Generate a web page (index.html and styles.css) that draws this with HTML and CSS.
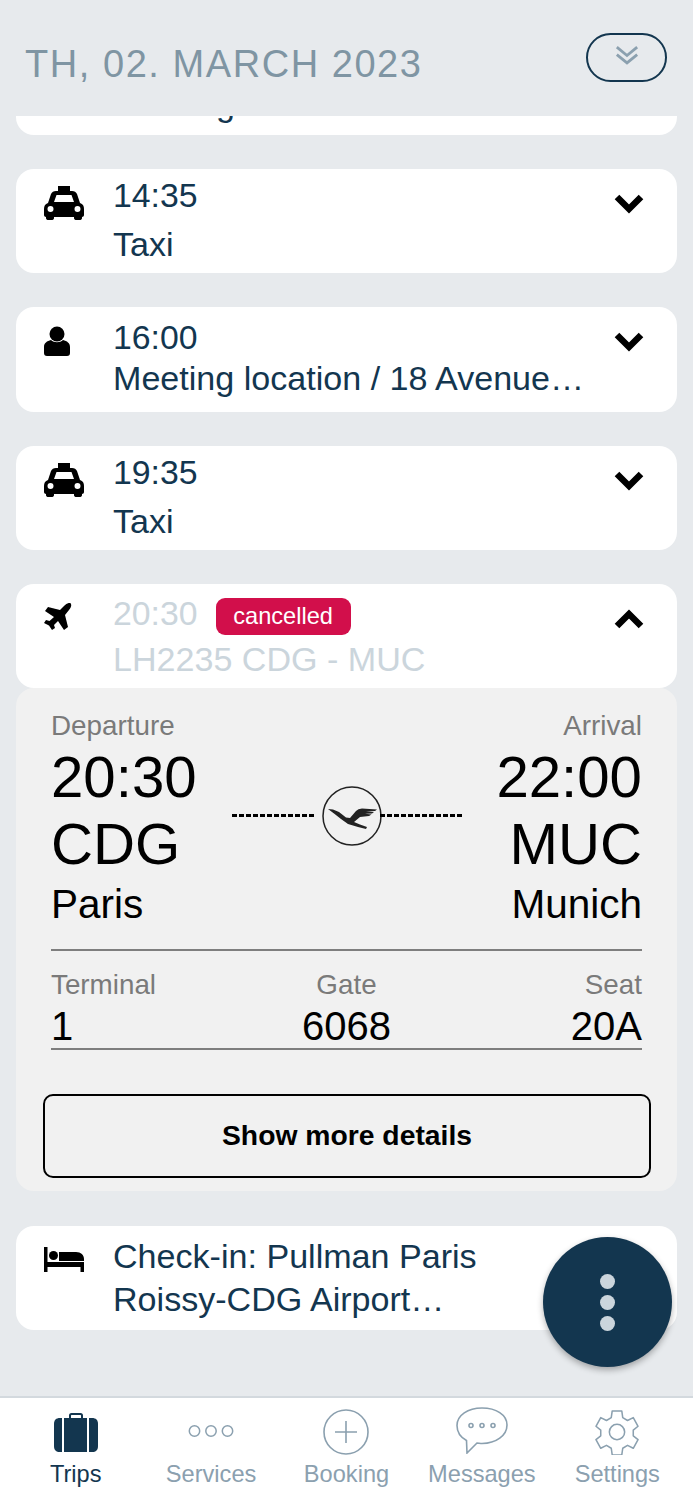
FILE: index.html
```html
<!DOCTYPE html>
<html lang="en">
<head>
    <meta charset="UTF-8">
    <meta name="viewport" content="width=device-width, initial-scale=1.0">
    <title>Trips</title>
    <link rel="stylesheet" href="styles.css">
</head>
<body>
    <header class="day-header">
        <h1 class="day-title">TH, 02. MARCH 2023</h1>
        <button class="collapse-all" aria-label="Collapse all">
            <svg viewBox="0 0 26 22" width="24" height="21"><path d="M2 2l11 9 11-9M2 10l11 9 11-9" fill="none" stroke="#8ba0af" stroke-width="3"/></svg>
        </button>
    </header>

    <main class="trip-list">
        <div class="card card-clipped">
            <p class="clipped-text">Meeting</p>
        </div>

        <div class="card">
            <svg class="card-icon" viewBox="0 0 40 34" width="40" height="34"><use href="#icon-taxi"/></svg>
            <div class="card-text">
                <p class="time">14:35</p>
                <p class="title title-low">Taxi</p>
            </div>
            <svg class="chevron" viewBox="0 0 30 20" width="30" height="20"><use href="#icon-down"/></svg>
        </div>

        <div class="card card-person">
            <svg class="card-icon" viewBox="0 0 26 30" width="26" height="30">
                <circle cx="13" cy="8" r="7.5"/>
                <path d="M7 14c3 3 9 3 12 0 4 1 7 3 7 7v6c0 2-1 3-3 3H3c-2 0-3-1-3-3v-6c0-4 3-6 7-7z"/>
            </svg>
            <div class="card-text">
                <p class="time">16:00</p>
                <p class="title">Meeting location / 18 Avenue…</p>
            </div>
            <svg class="chevron" viewBox="0 0 30 20" width="30" height="20"><use href="#icon-down"/></svg>
        </div>

        <div class="card">
            <svg class="card-icon" viewBox="0 0 40 34" width="40" height="34"><use href="#icon-taxi"/></svg>
            <div class="card-text">
                <p class="time">19:35</p>
                <p class="title title-low">Taxi</p>
            </div>
            <svg class="chevron" viewBox="0 0 30 20" width="30" height="20"><use href="#icon-down"/></svg>
        </div>

        <section class="flight">
            <div class="card card-flight">
                <svg class="card-icon" viewBox="0 0 28 28" width="28" height="28">
                    <path d="M26 0C28 1 27.500 4 25 7L21 12 24 24 20 27 14 18 10 22 11 25 8 27 5 22.500 0 20 2 17 5.500 18 10 14 1 8 4 4 16 7 20 3C22 1 24.500-.5 26 0z"/>
                </svg>
                <div class="card-text">
                    <p class="time muted">20:30<span class="badge">cancelled</span></p>
                    <p class="title muted">LH2235 CDG - MUC</p>
                </div>
                <svg class="chevron" viewBox="0 0 30 20" width="30" height="20"><path d="M3 17L15 5l12 12" fill="none" stroke="#000" stroke-width="6.500"/></svg>
            </div>

            <div class="flight-detail">
                <div class="route">
                    <div class="route-end">
                        <span class="label">Departure</span>
                        <span class="big">20:30</span>
                        <span class="big">CDG</span>
                        <span class="city">Paris</span>
                    </div>
                    <div class="route-line">
                        <span class="dots dots-left"></span>
                        <svg class="crane" viewBox="0 0 60 60" width="60" height="60">
                            <circle cx="30" cy="30" r="29" fill="none" stroke="#222" stroke-width="1.500"/>
                            <path d="M6 23L11 23.500 17 26 24 31.500 28 32 34 25Q36 22.500 40 22.500L55 23.500 53 25 44 25.500 52 26 50 27.500 43 27.700 49.500 28.500 47 30 38 31 32 36 38 38.500 45 41 44 43 36 41 26 38 19 33 12 27.500z" fill="#222"/>
                        </svg>
                        <span class="dots dots-right"></span>
                    </div>
                    <div class="route-end route-end-right">
                        <span class="label">Arrival</span>
                        <span class="big">22:00</span>
                        <span class="big">MUC</span>
                        <span class="city">Munich</span>
                    </div>
                </div>

                <div class="facts">
                    <div class="fact">
                        <span class="label">Terminal</span>
                        <span class="fact-value">1</span>
                    </div>
                    <div class="fact fact-center">
                        <span class="label">Gate</span>
                        <span class="fact-value">6068</span>
                    </div>
                    <div class="fact fact-right">
                        <span class="label">Seat</span>
                        <span class="fact-value">20A</span>
                    </div>
                </div>

                <button class="more-btn">Show more details</button>
            </div>
        </section>

        <div class="card">
            <svg class="card-icon card-icon-bed" viewBox="0 0 40 25" width="40" height="25">
                <path d="M0 0h3.500v15H40v10h-3.500v-5H3.500v5H0zM15 5h17c5 0 8 3 8 7v2H15z"/>
                <circle cx="9.500" cy="8.500" r="4.500"/>
            </svg>
            <div class="card-text">
                <p class="title title-wrap">Check-in: Pullman Paris</p>
                <p class="title title-wrap">Roissy-CDG Airport…</p>
            </div>
        </div>
    </main>

    <button class="fab" aria-label="More">
        <span class="fab-dot"></span>
        <span class="fab-dot"></span>
        <span class="fab-dot"></span>
    </button>

    <nav class="tab-bar">
        <a class="tab tab-active">
            <svg viewBox="0 0 46 39" width="46" height="39">
                <path d="M17 6V2.500c0-1 .5-1.500 1.500-1.500h9c1 0 1.500.5 1.500 1.500V6" fill="none" stroke="#13364f" stroke-width="2"/>
                <path d="M7 5h2v34H7c-4 0-6-2-6-6V11c0-4 2-6 6-6zM11 5h23v34H11zM36 5h3c4 0 6 2 6 6v22c0 4-2 6-6 6h-3z" fill="#13364f"/>
            </svg>
            <span>Trips</span>
        </a>
        <a class="tab tab-services">
            <svg viewBox="0 0 46 12" width="46" height="12" fill="none" stroke="#8ba0af" stroke-width="1.500">
                <circle cx="6.500" cy="6" r="5.200"/><circle cx="23" cy="6" r="5.200"/><circle cx="39.500" cy="6" r="5.200"/>
            </svg>
            <span>Services</span>
        </a>
        <a class="tab">
            <svg viewBox="0 0 46 46" width="46" height="46" fill="none" stroke="#8ba0af" stroke-width="1.600">
                <circle cx="23" cy="23" r="22"/><path d="M23 12v22M12 23h22"/>
            </svg>
            <span>Booking</span>
        </a>
        <a class="tab tab-messages">
            <svg viewBox="0 0 52 47" width="52" height="47" fill="none" stroke="#8ba0af" stroke-width="1.600">
                <path d="M26 1C12 1 1 8 1 18.500c0 7 4 12 9.500 15l.5 12.500 10-10c1 0 3.500.5 5 .5 14 0 25-8 25-18.500S40 1 26 1z"/>
                <circle cx="15" cy="18.500" r="2"/><circle cx="26" cy="18.500" r="2"/><circle cx="37" cy="18.500" r="2"/>
            </svg>
            <span>Messages</span>
        </a>
        <a class="tab">
            <svg viewBox="0 0 46 46" width="44" height="46" fill="none" stroke="#8ba0af" stroke-width="1.600">
                <path d="M18 1h10l1 7 5 3 6-3 5 9-5 4v6l5 4-5 9-6-3-5 3-1 7H18l-1-7-5-3-6 3-5-9 5-4v-6l-5-4 5-9 6 3 5-3z" stroke-linejoin="round"/>
                <circle cx="23" cy="23" r="8"/>
            </svg>
            <span>Settings</span>
        </a>
    </nav>

    <svg class="icon-defs" width="0" height="0">
        <defs>
            <g id="icon-taxi">
                <path d="M14 0h12v5h2c2.500 0 4 1 5 3l3 9c3 1 4 3 4 6v6c0 1-1 2-2 2v1c0 1.500-1 2-2.500 2h-3c-1.500 0-2.500-.5-2.500-2v-1H10v1c0 1.500-1 2-2.500 2h-3C3 34 2 33.500 2 32v-1c-1 0-2-1-2-2v-6c0-3 1-5 4-6l3-9c1-2 2.500-3 5-3h2zM12.500 9L10 16h20l-2.500-7zM6.500 20a3 3 0 100 6 3 3 0 000-6zM33.500 20a3 3 0 100 6 3 3 0 000-6z" fill-rule="evenodd"/>
            </g>
            <path id="icon-down" d="M3 3l12 12L27 3" fill="none" stroke="#000" stroke-width="6.500"/>
        </defs>
    </svg>
</body>
</html>
```

FILE: styles.css
```css
* {
    box-sizing: border-box;
}

html, body {
    height: 100%;
}

body {
    margin: 0;
    height: 1500px;
    overflow: hidden;
    position: relative;
    display: flex;
    flex-direction: column;
    background-color: #e7eaed;
    font-family: "Liberation Sans", Arial, sans-serif;
    color: #13364f;
}

p {
    margin: 0;
}

.icon-defs {
    display: none;
}

/* header */
.day-header {
    height: 116px;
    flex: none;
    padding: 33px 26px 0 25px;
    display: flex;
    justify-content: space-between;
    align-items: flex-start;
}

.day-title {
    margin: 11px 0 0 0;
    font-size: 38px;
    line-height: 40px;
    font-weight: normal;
    letter-spacing: 1.55px;
    color: #7f95a3;
}

.collapse-all {
    width: 81px;
    height: 49px;
    padding: 0 0 5px 0;
    background: none;
    border: 2px solid #13364f;
    border-radius: 25px;
    display: flex;
    align-items: center;
    justify-content: center;
}

/* cards */
.trip-list {
    flex: 1;
    min-height: 0;
    overflow: hidden;
    padding: 0 16px;
    display: flex;
    flex-direction: column;
    gap: 34px;
}

.card {
    flex: none;
    height: 104.4px;
    background-color: #fff;
    border-radius: 18px;
    display: flex;
    align-items: flex-start;
    padding: 0 33px 0 28px;
    position: relative;
}

.card-clipped {
    height: 19px;
    border-radius: 0 0 18px 18px;
    overflow: hidden;
}

.clipped-text {
    margin: -32px 0 0 70px;
    font-size: 34px;
    line-height: 40px;
}

.card-icon {
    flex: none;
    margin-top: 17px;
}

.card-person .card-icon {
    margin-top: 19px;
}

.card-flight {
    height: 103.6px;
}

.card-flight .card-icon {
    margin-top: 19px;
}

.card-icon-bed {
    margin-top: 21px;
}

.card-text {
    position: absolute;
    left: 97px;
    top: 0;
    right: 85px;
}

.time {
    margin-top: 7px;
    font-size: 33.8px;
    line-height: 38px;
    white-space: nowrap;
}

.title {
    font-size: 34.1px;
    line-height: 40px;
    white-space: nowrap;
}

.title-low {
    margin-top: 10px;
}

.title-wrap {
    line-height: 43px;
    position: relative;
    top: 9px;
}

.chevron {
    margin: 25px 0 0 auto;
}

.card-person .time {
    margin-top: 11px;
}

.card-person .title {
    margin-top: 2px;
}

.muted {
    color: #cbd5dc;
}

.card-flight .time {
    margin-top: 10px;
}

.card-flight .title {
    margin-top: 4px;
}

.badge {
    display: inline-block;
    margin: 4px 0 0 18px;
    width: 135px;
    height: 37px;
    background-color: #d20f4b;
    border-radius: 9px;
    color: #fff;
    font-size: 23.6px;
    line-height: 37px;
    text-align: center;
    vertical-align: top;
}

/* flight detail */
.flight {
    flex: none;
    margin-bottom: 1px;
}

.flight-detail {
    height: 503px;
    background-color: #f1f1f1;
    border-radius: 18px;
    padding: 22px 35px 0 35px;
    color: #000;
    display: flex;
    flex-direction: column;
}

.route {
    display: flex;
    justify-content: space-between;
    height: 241px;
    border-bottom: 2px solid #7e7e7e;
    position: relative;
}

.route-end {
    display: flex;
    flex-direction: column;
    align-items: flex-start;
}

.route-end-right {
    align-items: flex-end;
}

.label {
    font-size: 27.8px;
    line-height: 32px;
    color: #7a7a7a;
}

.big {
    font-size: 58.2px;
    line-height: 67px;
    position: relative;
    top: 1px;
}

.city {
    margin-top: 5px;
    font-size: 40.5px;
    line-height: 46px;
}

.route-line {
    position: absolute;
    left: 181px;
    top: 76px;
    width: 230px;
    display: flex;
    align-items: center;
}

.dots {
    height: 3px;
    background-image: repeating-linear-gradient(90deg, #000 0 5px, transparent 5px 7px);
}

.dots-left {
    width: 83px;
    margin-right: 7px;
}

.dots-right {
    width: 82px;
    margin-left: -2px;
}

.crane {
    flex: none;
}

.facts {
    display: grid;
    grid-template-columns: 1fr 1fr 1fr;
    height: 99px;
    padding-top: 18px;
    border-bottom: 2px solid #7e7e7e;
}

.fact {
    display: flex;
    flex-direction: column;
}

.fact-center {
    align-items: center;
}

.fact-right {
    align-items: flex-end;
}

.fact-value {
    margin-top: 3px;
    font-size: 40px;
    line-height: 44px;
}

.more-btn {
    width: 608px;
    height: 84px;
    margin: 44px 0 0 -8px;
    background: none;
    border: 2px solid #000;
    border-radius: 10px;
    font-family: inherit;
    font-size: 28.3px;
    font-weight: bold;
    color: #000;
}

/* floating button */
.fab {
    position: absolute;
    left: 543px;
    top: 1237px;
    width: 129px;
    height: 130px;
    border: none;
    border-radius: 50%;
    background-color: #13364f;
    box-shadow: 0 3px 6px rgba(0, 0, 0, 0.3);
    display: flex;
    flex-direction: column;
    align-items: center;
    justify-content: center;
    gap: 6px;
}

.fab-dot {
    width: 15px;
    height: 15px;
    border-radius: 50%;
    background-color: #cbd5dc;
}

/* bottom tabs */
.tab-bar {
    flex: none;
    height: 104px;
    background-color: #fff;
    border-top: 2px solid #d3d9de;
    padding: 0 8px;
    display: grid;
    grid-template-columns: repeat(5, 1fr);
}

.tab {
    position: relative;
    text-align: center;
    font-size: 23.6px;
    color: #8ba0af;
}

.tab svg {
    position: absolute;
    left: 50%;
    transform: translateX(-50%);
    top: 11px;
}

.tab span {
    position: absolute;
    left: 0;
    right: 0;
    top: 61px;
    line-height: 30px;
}

.tab-active {
    color: #13364f;
}

.tab-active svg {
    top: 15px;
}

.tab-services svg {
    top: 27px;
}

.tab-messages svg {
    top: 9px;
}
```
